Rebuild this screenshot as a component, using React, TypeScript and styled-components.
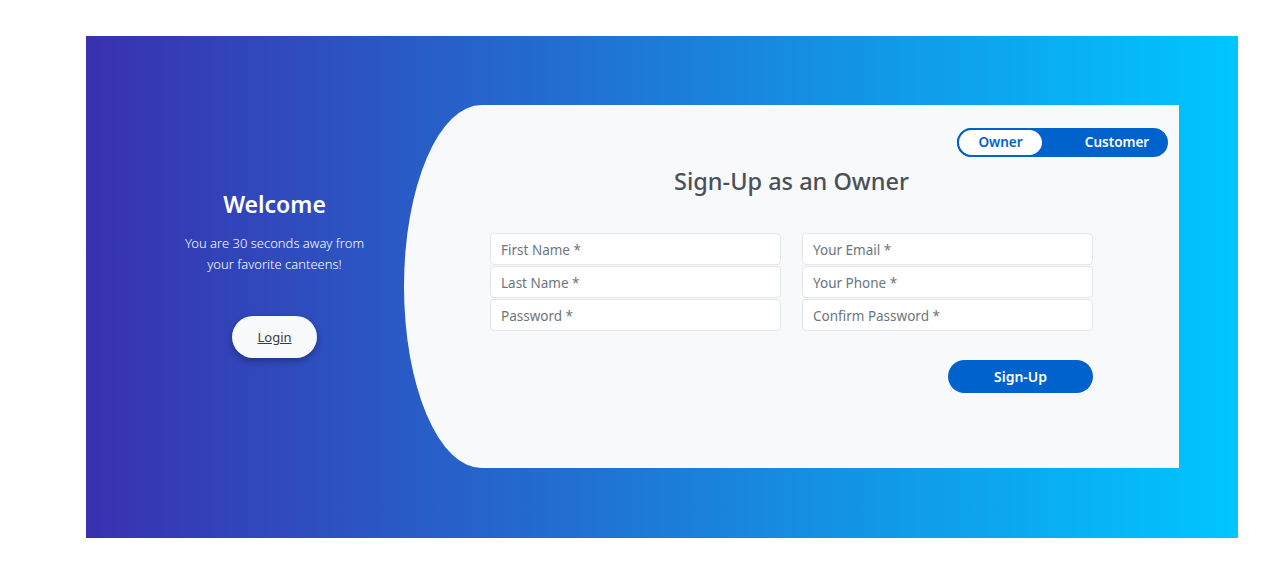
import React from "react";
import styled, { createGlobalStyle } from "styled-components";

const Global = createGlobalStyle`
  html, body { margin: 0; padding: 0; background: #ffffff; }
  body { font-family: "Noto Sans", "Open Sans", sans-serif; }
  * { box-sizing: border-box; }
`;

const Register = styled.div`
  margin: 36px 0 0 86px;
  width: 1152px;
  height: 502px;
  padding: 69px 59px 70px 59px;
  background: linear-gradient(to right, #3931af, #00c6ff);
  display: flex;
`;

const LeftCol = styled.div`
  width: 259px;
  flex-shrink: 0;
  display: flex;
  flex-direction: column;
  align-items: center;
  padding-top: 85px;
  color: #ffffff;
  text-align: center;
`;

const Welcome = styled.h3`
  margin: 0;
  font-size: 23px;
  line-height: 29px;
  font-weight: 600;
`;

const Tagline = styled.p`
  margin: 14px 0 0;
  font-size: 13px;
  line-height: 21px;
  font-weight: 300;
  width: 200px;
`;

const LoginButton = styled.button`
  margin-top: 41px;
  width: 85px;
  height: 42px;
  border: none;
  border-radius: 21px;
  background: #f8f9fa;
  color: #383d41;
  font-family: inherit;
  font-size: 13px;
  text-decoration: underline;
  box-shadow: 0 3px 7px rgba(0, 0, 0, 0.3);
  cursor: pointer;
`;

const RightPanel = styled.div`
  width: 775px;
  height: 363px;
  background: #f8f9fa;
  border-top-left-radius: 10% 50%;
  border-bottom-left-radius: 10% 50%;
  display: flex;
  flex-direction: column;
  padding: 23px 11px 0 0;
`;

const TopRow = styled.div`
  display: flex;
  justify-content: flex-end;
`;

const Toggle = styled.div`
  display: flex;
  width: 211px;
  height: 29px;
  background: #0062cc;
  border-radius: 15px;
`;

const Tab = styled.div<{ $active?: boolean }>`
  height: 29px;
  display: flex;
  align-items: center;
  justify-content: center;
  font-size: 13.5px;
  line-height: 1;
  font-weight: 600;
  border-radius: 15px;
  padding-top: 1px;
  ${(p) =>
    p.$active
      ? `width: 87px; background: #ffffff; color: #0062cc; border: 2px solid #0062cc;`
      : `flex: 1; color: #ffffff; padding-left: 22px;`}
`;

const Heading = styled.h3`
  margin: 10px 0 0;
  text-align: center;
  font-size: 23.5px;
  line-height: 29px;
  font-weight: 500;
  color: #495057;
  padding-left: 11px;
`;

const Form = styled.div`
  width: 603px;
  margin: 37px 0 0 86px;
  display: flex;
  flex-direction: column;
`;

const Columns = styled.div`
  display: grid;
  grid-template-columns: 291px 291px;
  column-gap: 21px;
`;

const Stack = styled.div`
  display: flex;
  flex-direction: column;
  gap: 1px;
`;

const Input = styled.input`
  height: 32px;
  width: 100%;
  border: 1px solid #e3e6ea;
  border-radius: 4px;
  background: #ffffff;
  padding: 1px 10px 0;
  font-family: inherit;
  font-size: 13.5px;
  color: #495057;
  outline: none;
  &::placeholder { color: #6c757d; }
`;

const Actions = styled.div`
  display: flex;
  justify-content: flex-end;
  margin-top: 29px;
`;

const SubmitButton = styled.button`
  width: 145px;
  height: 33px;
  border: none;
  border-radius: 17px;
  background: #0062cc;
  color: #ffffff;
  font-family: inherit;
  font-size: 14px;
  font-weight: 600;
  cursor: pointer;
`;

export default function App() {
  return (
    <>
      <Global />
      <Register>
        <LeftCol>
          <Welcome>Welcome</Welcome>
          <Tagline>You are 30 seconds away from your favorite canteens!</Tagline>
          <LoginButton>Login</LoginButton>
        </LeftCol>
        <RightPanel>
          <TopRow>
            <Toggle>
              <Tab $active>Owner</Tab>
              <Tab>Customer</Tab>
            </Toggle>
          </TopRow>
          <Heading>Sign-Up as an Owner</Heading>
          <Form>
            <Columns>
              <Stack>
                <Input placeholder="First Name *" />
                <Input placeholder="Last Name *" />
                <Input type="password" placeholder="Password *" />
              </Stack>
              <Stack>
                <Input placeholder="Your Email *" />
                <Input placeholder="Your Phone *" />
                <Input type="password" placeholder="Confirm Password *" />
              </Stack>
            </Columns>
            <Actions>
              <SubmitButton>Sign-Up</SubmitButton>
            </Actions>
          </Form>
        </RightPanel>
      </Register>
    </>
  );
}
